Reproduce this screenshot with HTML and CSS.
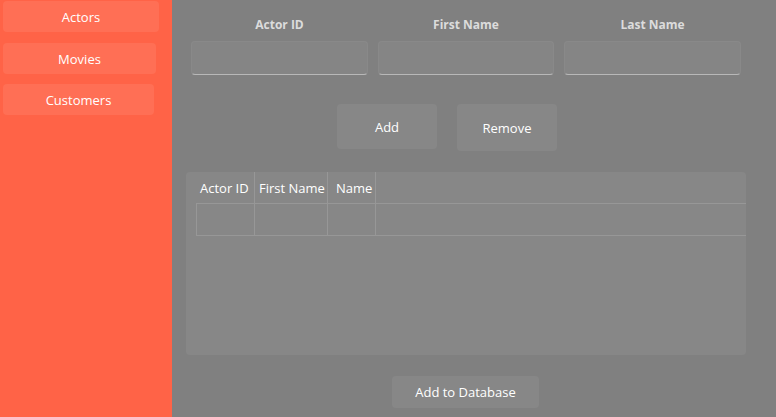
FILE: index.html
```html
<!DOCTYPE html>
<html>
<head>
<meta charset="utf-8">
<link rel="stylesheet" href="styles.css">
</head>
<body>
<div class="app">
  <aside class="sidebar">
    <button class="nav-btn nav-actors">Actors</button>
    <button class="nav-btn nav-movies">Movies</button>
    <button class="nav-btn nav-customers">Customers</button>
  </aside>
  <main class="main">
    <div class="fields">
      <div class="field">
        <label class="field-label">Actor ID</label>
        <div class="input"></div>
      </div>
      <div class="field">
        <label class="field-label">First Name</label>
        <div class="input"></div>
      </div>
      <div class="field">
        <label class="field-label">Last Name</label>
        <div class="input"></div>
      </div>
    </div>
    <div class="actions">
      <button class="btn btn-add">Add</button>
      <button class="btn btn-remove">Remove</button>
    </div>
    <div class="grid">
      <div class="grid-head">
        <div class="hcell c1">Actor ID</div>
        <div class="hcell c2">First Name</div>
        <div class="hcell c3">Name</div>
        <div class="hcell c4"></div>
      </div>
      <div class="grid-row">
        <div class="cell c1"></div>
        <div class="cell c2"></div>
        <div class="cell c3"></div>
        <div class="cell c4"></div>
      </div>
    </div>
    <div class="footer">
      <button class="btn btn-db">Add to Database</button>
    </div>
  </main>
</div>
</body>
</html>
```

FILE: styles.css
```css
* { box-sizing: border-box; }
html, body { margin: 0; padding: 0; }
body {
  width: 776px;
  height: 417px;
  overflow: hidden;
  font-family: "Open Sans", "Noto Sans", sans-serif;
  background: #808080;
}
.app { display: flex; height: 417px; }
.sidebar {
  width: 172px;
  flex: none;
  background: #ff6347;
  display: flex;
  flex-direction: column;
  align-items: flex-start;
  padding: 1px 0 0 3px;
  gap: 11px;
}
.nav-btn {
  height: 31px;
  border: none;
  border-radius: 4px;
  background: #ff6f55;
  color: #fff;
  font-family: inherit;
  font-size: 13px;
  padding: 0;
}
.nav-actors { width: 156px; }
.nav-movies { width: 153px; }
.nav-customers { width: 151px; margin-top: -1px; }
.main {
  flex: 1;
  display: flex;
  flex-direction: column;
  padding: 15px 0 0 0;
}
.fields {
  display: flex;
  gap: 10px;
  padding-left: 19px;
}
.field {
  width: 177px;
  display: flex;
  flex-direction: column;
  gap: 6px;
}
.field:nth-child(2) { width: 176px; }
.field-label {
  text-align: center;
  font-size: 12px;
  font-weight: 700;
  color: #dcdcdc;
  line-height: 20px;
  height: 20px;
}
.input {
  height: 34px;
  background: #858585;
  border-radius: 4px;
  border: 1px solid #898989;
  border-bottom: 1px solid #b8b8b8;
}
.actions {
  display: flex;
  align-items: flex-start;
  gap: 20px;
  margin-top: 29px;
  padding-left: 165px;
}
.btn {
  border: none;
  border-radius: 4px;
  background: #878787;
  color: #fff;
  font-family: inherit;
  font-size: 13px;
  padding: 0;
}
.btn-add { width: 100px; height: 45px; }
.btn-remove { width: 100px; height: 47px; }
.grid {
  margin: 21px 0 0 14px;
  width: 560px;
  height: 183px;
  background: #878787;
  border-radius: 4px;
  padding-left: 10px;
}
.grid-head, .grid-row { display: flex; }
.grid-head {
  height: 32px;
  border-bottom: 1px solid #979797;
}
.grid-row {
  height: 32px;
  border-bottom: 1px solid #979797;
  border-left: 1px solid #979797;
}
.hcell, .cell {
  border-right: 1px solid #979797;
  color: #fff;
  font-size: 13px;
  line-height: 32px;
  white-space: nowrap;
}
.hcell { padding-left: 4px; }
.hcell.c3 { padding-left: 8px; }
.c1 { width: 59px; }
.c2 { width: 73px; }
.c3 { width: 48px; }
.c4 { flex: 1; border-right: none; }
.grid-row .c1 { width: 58px; }
.footer {
  margin-top: 21px;
  padding-left: 220px;
}
.btn-db { width: 147px; height: 32px; }
```
